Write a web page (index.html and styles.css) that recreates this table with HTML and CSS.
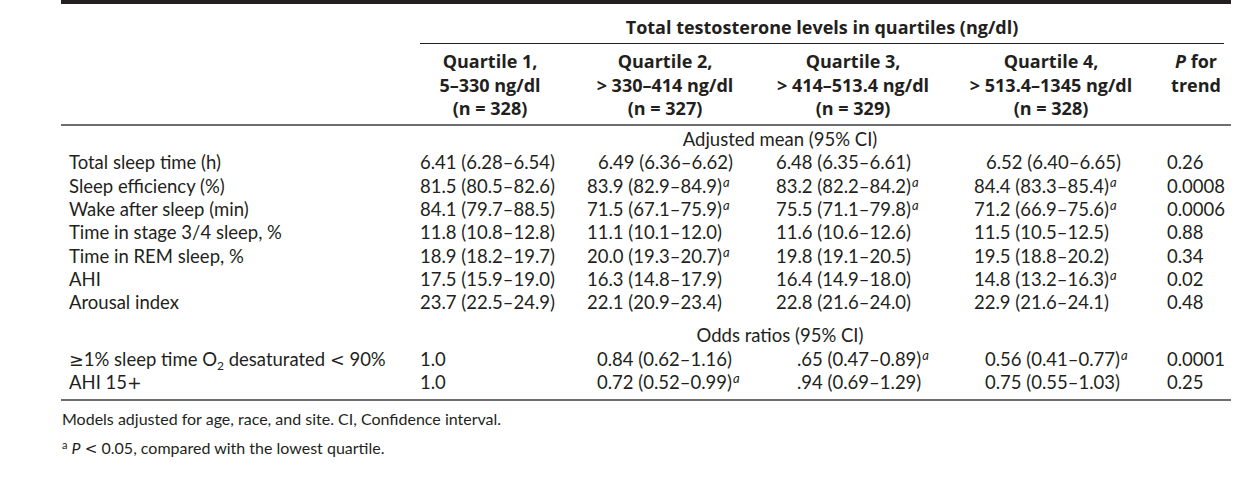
FILE: index.html
```html
<!DOCTYPE html>
<html lang="en">
<head>
<meta charset="utf-8">
<title>Total testosterone levels in quartiles</title>
<link rel="stylesheet" href="styles.css">
</head>
<body>
<div class="page">
  <table class="tbl">
    <colgroup>
      <col class="c0"><col class="c1"><col class="c2"><col class="c3"><col class="c4"><col class="c5">
    </colgroup>
    <thead>
      <tr class="h1">
        <th></th>
        <th colspan="5"><div class="span-title">Total testosterone levels in quartiles (ng/dl)</div></th>
      </tr>
      <tr class="h2">
        <th></th>
        <th>Quartile 1,<br>5–330 ng/dl<br>(n = 328)</th>
        <th>Quartile 2,<br>&gt; 330–414 ng/dl<br>(n = 327)</th>
        <th>Quartile 3,<br>&gt; 414–513.4 ng/dl<br>(n = 329)</th>
        <th>Quartile 4,<br>&gt; 513.4–1345 ng/dl<br>(n = 328)</th>
        <th><i>P</i> for<br>trend</th>
      </tr>
    </thead>
    <tbody class="mean">
      <tr class="sec">
        <td></td>
        <td colspan="4" class="sec-title">Adjusted mean (95% CI)</td>
        <td></td>
      </tr>
      <tr>
        <td class="lbl">Total sleep time (h)</td>
        <td class="v1">6.41 (6.28–6.54)</td>
        <td class="v2 ind">6.49 (6.36–6.62)</td>
        <td class="v3">6.48 (6.35–6.61)</td>
        <td class="v4 ind">6.52 (6.40–6.65)</td>
        <td class="v5">0.26</td>
      </tr>
      <tr>
        <td class="lbl">Sleep efficiency (%)</td>
        <td class="v1">81.5 (80.5–82.6)</td>
        <td class="v2">83.9 (82.9–84.9)<span class="sup">a</span></td>
        <td class="v3">83.2 (82.2–84.2)<span class="sup">a</span></td>
        <td class="v4">84.4 (83.3–85.4)<span class="sup">a</span></td>
        <td class="v5">0.0008</td>
      </tr>
      <tr>
        <td class="lbl">Wake after sleep (min)</td>
        <td class="v1">84.1 (79.7–88.5)</td>
        <td class="v2">71.5 (67.1–75.9)<span class="sup">a</span></td>
        <td class="v3">75.5 (71.1–79.8)<span class="sup">a</span></td>
        <td class="v4">71.2 (66.9–75.6)<span class="sup">a</span></td>
        <td class="v5">0.0006</td>
      </tr>
      <tr>
        <td class="lbl">Time in stage 3/4 sleep, %</td>
        <td class="v1">11.8 (10.8–12.8)</td>
        <td class="v2">11.1 (10.1–12.0)</td>
        <td class="v3">11.6 (10.6–12.6)</td>
        <td class="v4">11.5 (10.5–12.5)</td>
        <td class="v5">0.88</td>
      </tr>
      <tr>
        <td class="lbl">Time in REM sleep, %</td>
        <td class="v1">18.9 (18.2–19.7)</td>
        <td class="v2">20.0 (19.3–20.7)<span class="sup">a</span></td>
        <td class="v3">19.8 (19.1–20.5)</td>
        <td class="v4">19.5 (18.8–20.2)</td>
        <td class="v5">0.34</td>
      </tr>
      <tr>
        <td class="lbl">AHI</td>
        <td class="v1">17.5 (15.9–19.0)</td>
        <td class="v2">16.3 (14.8–17.9)</td>
        <td class="v3">16.4 (14.9–18.0)</td>
        <td class="v4">14.8 (13.2–16.3)<span class="sup">a</span></td>
        <td class="v5">0.02</td>
      </tr>
      <tr>
        <td class="lbl">Arousal index</td>
        <td class="v1">23.7 (22.5–24.9)</td>
        <td class="v2">22.1 (20.9–23.4)</td>
        <td class="v3">22.8 (21.6–24.0)</td>
        <td class="v4">22.9 (21.6–24.1)</td>
        <td class="v5">0.48</td>
      </tr>
    </tbody>
    <tbody class="odds">
      <tr class="sec">
        <td></td>
        <td colspan="4" class="sec-title">Odds ratios (95% CI)</td>
        <td></td>
      </tr>
      <tr>
        <td class="lbl"><span class="op">≥</span>1% sleep time O<sub class="sub">2</sub> desaturated <span class="op">&lt;</span> 90%</td>
        <td class="v1">1.0</td>
        <td class="v2">0.84 (0.62–1.16)</td>
        <td class="v3">.65 (0.47–0.89)<span class="sup">a</span></td>
        <td class="v4">0.56 (0.41–0.77)<span class="sup">a</span></td>
        <td class="v5">0.0001</td>
      </tr>
      <tr class="last">
        <td class="lbl">AHI 15<span class="op">+</span></td>
        <td class="v1">1.0</td>
        <td class="v2">0.72 (0.52–0.99)<span class="sup">a</span></td>
        <td class="v3">.94 (0.69–1.29)</td>
        <td class="v4">0.75 (0.55–1.03)</td>
        <td class="v5">0.25</td>
      </tr>
    </tbody>
  </table>
  <div class="notes">
    <p class="note">Models adjusted for age, race, and site. CI, Confidence interval.</p>
    <p class="note"><span class="fsup">a</span> <i>P</i> <span class="op">&lt;</span> 0.05, compared with the lowest quartile.</p>
  </div>
</div>
</body>
</html>
```
FILE: styles.css
```css
html, body {
  margin: 0;
  padding: 0;
  background: #ffffff;
}

body {
  font-family: Lato, "Open Sans", "Noto Sans", sans-serif;
  color: #231f20;
}

.page {
  padding-left: 61px;
}

.tbl {
  width: 1170px;
  table-layout: fixed;
  border-collapse: collapse;
  border-top: 4px solid #231f20;
  font-size: 18.5px;
}

.c0 { width: 354px; }
.c1 { width: 150px; }
.c2 { width: 200px; }
.c3 { width: 176px; }
.c4 { width: 220px; }
.c5 { width: 70px; }

.tbl th,
.tbl td {
  padding: 0;
  white-space: nowrap;
  vertical-align: top;
}

.tbl th {
  font-family: "Open Sans", "Noto Sans", sans-serif;
  font-size: 18px;
  font-weight: 700;
  text-align: center;
  line-height: 23.33px;
}

.tbl th i {
  font-style: italic;
}

.h1 th {
  padding-top: 12px;
}

.span-title {
  margin: 0 7px 0 5px;
  padding-bottom: 4px;
  border-bottom: 1px solid #231f20;
}

.h2 th {
  padding-top: 6px;
  padding-bottom: 4px;
  border-bottom: 2px solid #6d6e71;
}

.tbl td {
  text-align: left;
  line-height: 23.33px;
}

.sec-title {
  text-align: center !important;
  padding-right: 16px !important;
}

.mean .sec td {
  padding-top: 2px;
  line-height: 23px;
}

.odds .sec td {
  padding-top: 8px;
  line-height: 25.33px;
}

.odds tr:not(.sec) td {
  line-height: 23px;
}

.odds tr.last td {
  padding-bottom: 5px;
  border-bottom: 2px solid #6d6e71;
}

.lbl { padding-left: 8px !important; }
.v1 { padding-left: 5px !important; }
.v2 { padding-left: 22px !important; }
.v3 { padding-left: 11px !important; }
.v4 { padding-left: 33px !important; }
.v5 { padding-left: 6px !important; }

.v2.ind { padding-left: 33px !important; }
.v4.ind { padding-left: 45px !important; }

.odds .v2 { padding-left: 32px !important; }
.odds .v3 { padding-left: 32px !important; }
.odds .v4 { padding-left: 44px !important; }

.op {
  font-family: "DejaVu Sans", "Open Sans", sans-serif;
  font-size: 0.95em;
  line-height: 0;
}

.sup {
  font-size: 13px;
  font-style: italic;
  vertical-align: 6px;
  line-height: 0;
  margin-left: 1px;
}

.sub {
  font-size: 12px;
  vertical-align: -4px;
  line-height: 0;
}

.notes {
  padding-left: 1px;
  padding-top: 3px;
}

.note {
  margin: 0;
  font-size: 16px;
  line-height: 29px;
}

.fsup {
  font-size: 11px;
  vertical-align: 5px;
  line-height: 0;
}
```
